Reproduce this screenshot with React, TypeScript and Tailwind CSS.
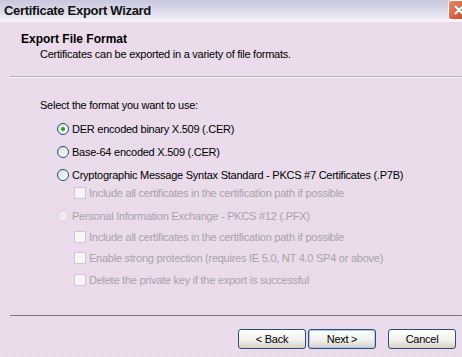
const FONT = "font-['Tahoma','Liberation_Sans',sans-serif]";

function Radio({ checked, disabled }: { checked?: boolean; disabled?: boolean }) {
  return (
    <span
      className={
        "flex h-[12px] w-[12px] shrink-0 items-center justify-center rounded-full border " +
        (disabled
          ? "border-[#d6cfd6] bg-[#efe9ef]"
          : "border-[#1c5180] bg-[linear-gradient(135deg,#dcdad5,#ffffff)]")
      }
    >
      {checked && <span className="h-[4px] w-[4px] rounded-full bg-[#21a121]" />}
    </span>
  );
}

function Check() {
  return <span className="h-[12px] w-[12px] shrink-0 border border-[#cfc8cf] bg-[#f7f4f7]" />;
}

function RadioRow({ label, checked, disabled, mt }: { label: string; checked?: boolean; disabled?: boolean; mt: string }) {
  return (
    <div className={"flex h-[14px] items-center gap-[3px] pl-[57px] " + mt}>
      <Radio checked={checked} disabled={disabled} />
      <span className={disabled ? "text-[#aaa2aa]" : "text-black"}>{label}</span>
    </div>
  );
}

function CheckRow({ label, mt }: { label: string; mt: string }) {
  return (
    <div className={"flex h-[14px] items-center gap-[3px] pl-[74px] " + mt}>
      <Check />
      <span className="text-[#aaa2aa]">{label}</span>
    </div>
  );
}

function Button({ label, focused }: { label: string; focused?: boolean }) {
  return (
    <button
      className={
        "flex h-[20px] w-[68px] items-center justify-center rounded-[3px] border border-[#2b4f78] bg-[linear-gradient(#ffffff,#f0eeea_60%,#d6d0c5)] text-[11px] tracking-[-0.25px] text-black " +
        (focused ? "shadow-[inset_0_0_0_1px_#a8caf4]" : "")
      }
    >
      {label}
    </button>
  );
}

export default function App() {
  return (
    <div
      className={
        "flex h-[357px] w-[462px] flex-col overflow-hidden text-[11px] leading-[14px] tracking-[-0.25px] text-black " +
        FONT +
        " bg-[conic-gradient(#efd2ef_25%,#e6e4e6_0_50%,#efd2ef_0_75%,#e6e4e6_0)] bg-[length:2px_2px]"
      }
    >
      {/* title bar */}
      <div className="flex h-[22px] items-center justify-between bg-[linear-gradient(#c9c7de,#dcdaea_50%,#f6f5fa)] pl-[4px]">
        <span className="text-[13px] font-bold tracking-[-0.3px] text-[#111]">Certificate Export Wizard</span>
        <span className="mb-[2px] mr-[-8px] flex h-[20px] w-[22px] items-center justify-center rounded-[3px] border border-white bg-[linear-gradient(135deg,#e88a6a,#c8401f)]">
          <svg width="10" height="10" viewBox="0 0 10 10">
            <path d="M1 1L9 9M9 1L1 9" stroke="white" strokeWidth="2" />
          </svg>
        </span>
      </div>

      {/* header */}
      <div className="pt-[10px]">
        <div className="pl-[21px] text-[12px] font-bold tracking-normal">Export File Format</div>
        <div className="pl-[40px] pt-[1px]">Certificates can be exported in a variety of file formats.</div>
      </div>
      <div className="ml-[10px] mt-[15px] border-t border-[#b9b3b9] border-b border-b-[#f5f2f5]" />

      {/* body */}
      <div className="pt-[20px]">
        <div className="h-[14px] pl-[40px]">Select the format you want to use:</div>
        <RadioRow mt="mt-[10px]" label="DER encoded binary X.509 (.CER)" checked />
        <RadioRow mt="mt-[9px]" label="Base-64 encoded X.509 (.CER)" />
        <RadioRow mt="mt-[9px]" label="Cryptographic Message Syntax Standard - PKCS #7 Certificates (.P7B)" />
        <CheckRow mt="mt-[4px]" label="Include all certificates in the certification path if possible" />
        <RadioRow mt="mt-[9px]" label="Personal Information Exchange - PKCS #12 (.PFX)" disabled />
        <CheckRow mt="mt-[7px]" label="Include all certificates in the certification path if possible" />
        <CheckRow mt="mt-[7px]" label="Enable strong protection (requires IE 5.0, NT 4.0 SP4 or above)" />
        <CheckRow mt="mt-[8px]" label="Delete the private key if the export is successful" />
      </div>

      <div className="ml-[10px] mt-auto border-t border-[#7b7a86]" />
      <div className="flex items-center justify-end pb-[8px] pr-[6px] pt-[13px]">
        <div className="flex gap-[2px]">
          <Button label="< Back" />
          <Button label="Next >" focused />
        </div>
        <div className="ml-[12px]">
          <Button label="Cancel" />
        </div>
      </div>
    </div>
  );
}
